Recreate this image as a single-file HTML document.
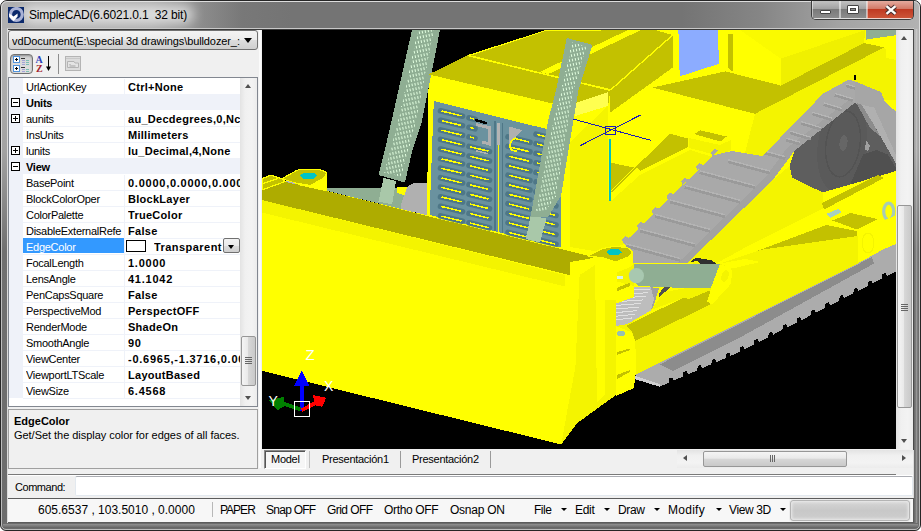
<!DOCTYPE html>
<html><head><meta charset="utf-8">
<style>
html,body{margin:0;padding:0;}
body{width:921px;height:531px;position:relative;overflow:hidden;background:#fff;font-family:"Liberation Sans",sans-serif;font-size:11px;color:#000;}
.a{position:absolute;}
i{position:absolute;display:block;}
#frame{left:0;top:0;width:921px;height:531px;box-sizing:border-box;background:linear-gradient(#b4b4b4 0,#b2b2b2 40px,#a2a2a2 150px,#707070 250px,#6c6c6c 531px);border:1px solid #262626;border-radius:7px 7px 6px 6px;}
#frame2{left:1px;top:1px;width:919px;height:529px;box-sizing:border-box;border:1px solid rgba(255,255,255,.55);border-radius:6px 6px 5px 5px;}
#title{left:2px;top:2px;width:917px;height:26px;background:linear-gradient(90deg,#b0b0b0 0,#a8a8a8 150px,#8c8c8c 200px,#787878 240px,#747474 290px,#747474 680px,#868686 760px,#a4a4a4 840px,#b2b2b2 917px);border-radius:5px 5px 0 0;}
#client{left:8px;top:30px;width:905px;height:492px;background:#f0f0f0;}
#cborder{left:7px;top:28px;width:907px;height:495px;box-sizing:border-box;border:1px solid #dcdcdc;border-top-color:#c8c8c8;}
.t{white-space:nowrap;line-height:16px;}
.b{font-weight:bold;}
#ttext{left:29px;top:7px;letter-spacing:-0.165px;font-size:12px;line-height:16px;white-space:nowrap;color:#000;}
#glow{left:22px;top:5px;width:172px;height:19px;background:rgba(255,255,255,.62);filter:blur(6px);border-radius:10px;}
/* window buttons */
#wb{left:811px;top:1px;width:103px;height:19px;border:1px solid #3c3c3c;border-top:none;box-sizing:border-box;border-radius:0 0 5px 5px;overflow:hidden;background:#888;}
#wb .bt{position:absolute;top:0;height:18px;box-sizing:border-box;border:1px solid rgba(255,255,255,.5);border-top:none;}
.gl{background:linear-gradient(#c2c2c2 0,#a2a2a2 45%,#7a7a7a 50%,#8c8c8c 100%);}
.rd{background:linear-gradient(#e4aa9e 0,#d27a68 45%,#c03a22 50%,#cc5438 100%);}
/* combo */
#combo{left:8px;top:30px;width:250px;height:20px;box-sizing:border-box;border:1px solid #707070;border-radius:3px;background:linear-gradient(#f3f3f3,#ebebeb 50%,#dddddd 50%,#cfcfcf);}
#combo .t{left:3px;top:2px;font-size:11px;letter-spacing:-0.1px;width:232px;overflow:hidden;}
/* toolbar */
#tb1{left:10px;top:54px;width:23px;height:20px;box-sizing:border-box;border:1px solid #727272;border-radius:4px;background:linear-gradient(#cdcdcd,#dadada 40%,#e0e0e0);box-shadow:inset 0 1px 2px rgba(0,0,0,.3);}
/* grid */
#grid{left:8px;top:77px;width:250px;height:330px;box-sizing:border-box;border:1px solid #828790;background:#fff;}
#gin{left:0;top:0;width:231px;height:328px;overflow:hidden;}
#gutter{left:0;top:0;width:14px;height:320px;background:#eff2f9;}
.row{position:absolute;left:0;height:16px;width:231px;}
.cat{background:#eff2f9;}
.nm{top:1px;font-size:11px;letter-spacing:-0.27px;}
.val{top:1px;font-size:11px;letter-spacing:0.28px;}
.vline{left:115px;top:1px;width:1px;height:16px;background:#eff2f9;}
.hline{left:14px;top:16px;width:217px;height:1px;background:#eff2f9;}
.box{position:absolute;left:2px;width:9px;height:9px;box-sizing:border-box;border:1px solid #000;background:#fff;}
.box .h{left:1px;top:3px;width:5px;height:1px;background:#000;}
.box .v{left:3px;top:1px;width:1px;height:5px;background:#000;}
.selbg{left:14px;top:0;width:101px;height:15px;background:#3399ff;}
.swatch{left:117px;top:2px;width:20px;height:12px;box-sizing:border-box;border:1px solid #000;background:#fff;}
.ddbtn{left:214px;top:0;width:17px;height:15px;box-sizing:border-box;border:1px solid #707070;border-radius:2px;background:linear-gradient(#f2f2f2,#ebebeb 50%,#dddddd 50%,#cfcfcf);}
.ddbtn i{left:4px;top:6px;border:3.5px solid transparent;border-top:4px solid #000;border-bottom:none;}
/* scrollbars */
.sbv{background:linear-gradient(90deg,#e3e3e3,#f0f0f0 30%,#f3f3f3 70%,#ececec);}
.sbh{background:linear-gradient(#e3e3e3,#f0f0f0 30%,#f3f3f3 70%,#ececec);}
.thv{box-sizing:border-box;border:1px solid #979797;border-radius:2px;background:linear-gradient(90deg,#f5f5f5,#e9e9e9 45%,#d7d7d7 50%,#c9c9c9);}
.thh{box-sizing:border-box;border:1px solid #979797;border-radius:2px;background:linear-gradient(#f5f5f5,#e9e9e9 45%,#d7d7d7 50%,#c9c9c9);}
.au{border:3.5px solid transparent;border-bottom:4px solid #505050;border-top:none;width:0;height:0;}
.ad{border:3.5px solid transparent;border-top:4px solid #505050;border-bottom:none;width:0;height:0;}
.al{border:3.5px solid transparent;border-right:4px solid #505050;border-left:none;width:0;height:0;}
.ar{border:3.5px solid transparent;border-left:4px solid #505050;border-right:none;width:0;height:0;}
/* desc */
#desc{left:8px;top:409px;width:250px;height:60px;box-sizing:border-box;border:1px solid #a0a0a0;background:#f0f0f0;}
/* viewport */
#vp{left:262px;top:30px;width:634px;height:419px;background:#000;overflow:hidden;}
/* tabs */
.tab{top:451px;height:19px;font-size:11px;letter-spacing:-0.27px;line-height:16px;white-space:nowrap;}
/* status */
#status{left:8px;top:499px;width:905px;height:23px;background:#f7f7f7;}
.st{top:502px;font-size:12px;line-height:16px;white-space:nowrap;}
.dd{border:3px solid transparent;border-top:3.5px solid #000;border-bottom:none;width:0;height:0;top:508px;}
</style></head><body>
<div class="a" id="frame"></div>
<div class="a" id="title"></div>
<div class="a" id="frame2"></div>
<div class="a" id="glow"></div>
<div class="a" id="cborder"></div>
<div class="a" id="client"></div>

<i style="left:8px;top:29px;width:906px;height:1px;background:#3a3a3a"></i><i style="left:913px;top:29px;width:1px;height:421px;background:#4a4a4a"></i><i style="left:259px;top:30px;width:2px;height:438px;background:#fbfbfb"></i>
<!-- title -->
<svg class="a" style="left:8px;top:7px" width="16" height="16" viewBox="0 0 16 16">
<rect width="16" height="16" fill="#0c2a6c"/>
<circle cx="8.4" cy="7.4" r="5.9" fill="none" stroke="#a9b2d6" stroke-width="3.2"/>
<polygon points="1.2,6.6 5.5,9.6 9.6,6.4 9.6,9.6 5.7,13.9 1.2,10" fill="#fff"/>
</svg>
<div class="a" id="ttext">SimpleCAD(6.6021.0.1&nbsp; 32 bit)</div>
<div class="a" id="wb">
 <div class="bt gl" style="left:0;width:28px"></div>
 <div class="bt gl" style="left:28px;width:27px"></div>
 <div class="bt rd" style="left:55px;width:47px"></div>
 <i style="left:8px;top:9px;width:11px;height:4px;box-sizing:border-box;border:1px solid #444;background:#fff;border-radius:1px"></i>
 <i style="left:35px;top:4px;width:12px;height:9px;box-sizing:border-box;border:1px solid #444;background:#fff;border-radius:1px"></i>
 <i style="left:38px;top:7px;width:6px;height:3px;box-sizing:border-box;border:1px solid #444;background:#8f8f8f"></i>
 <svg class="a" style="left:72px;top:3px" width="14" height="12" viewBox="0 0 14 12"><path d="M2.5 2.2 L11.5 9.8 M11.5 2.2 L2.5 9.800" stroke="#4a3030" stroke-width="4.4"/><path d="M2.5 2.2 L11.5 9.8 M11.5 2.2 L2.5 9.800" stroke="#fff" stroke-width="2.4"/></svg>
</div>

<!-- combo -->
<div class="a" id="combo"><span class="a t">vdDocument(E:\special 3d drawings\bulldozer_:</span>
<i style="left:235px;top:7px;border:4px solid transparent;border-top:5px solid #000;border-bottom:none"></i></div>

<!-- toolbar -->
<div class="a" id="tb1"></div>
<svg class="a" style="left:10px;top:54px" width="75" height="20" viewBox="0 0 75 20">
 <g fill="#fff" stroke="#4f93dd" stroke-width="1"><rect x="3.5" y="2.5" width="6" height="6"/><rect x="3.5" y="11.5" width="6" height="6"/></g>
 <g stroke="#000" stroke-width="1"><path d="M5 5.5h3M6.5 4v3M5 14.5h3M6.5 13v3"/><path d="M11 4.5h4M11 13.5h4" stroke="#333"/></g>
 <g stroke-width="1"><path d="M12 6.5h3M12 8.5h3M12 10.5h3M12 15.5h3M12 17.5h3" stroke="#a6a2d8"/><path d="M16 6.5h3M16 8.5h3M16 10.5h3M16 15.5h3M16 17.5h3" stroke="#7cc0b4"/></g>
 <text x="25.5" y="9.3" font-family="Liberation Serif,serif" font-weight="bold" font-size="10" fill="#2b3fb8">A</text>
 <text x="26" y="17.6" font-family="Liberation Serif,serif" font-weight="bold" font-size="10" fill="#a3222f">Z</text>
 <path d="M38.5 2v14" stroke="#000" stroke-width="1"/><path d="M36 12.5h5l-2.5 4.5z" fill="#000"/>
 <path d="M48.5 0v20" stroke="#8e8e8e" stroke-width="1"/>
 <g fill="none" stroke="#b4b4b4"><rect x="55.500" y="2.500" width="15" height="14" fill="#dcdcdc"/><path d="M56 4.500h14" stroke="#c8c8c8"/><path d="M57.500 7.500h6.500l1 1.500h3.500v4.500h-11z" fill="#e4e4e4" stroke="#b4b4b4"/><path d="M59.500 10.500h1M59.500 12h6" stroke="#a4a4a4"/></g>
</svg>

<!-- grid -->
<div class="a" id="grid">
 <div class="a" id="gin"><div class="a" id="gutter"></div>
<div class="row" style="top:0px"><span class="t a nm" style="left:17px;width:97px;overflow:hidden">UrlActionKey</span><span class="a vline"></span><span class="t a val b" style="left:119px;width:112px;overflow:hidden">Ctrl+None</span><span class="a hline"></span></div>
<div class="row cat" style="top:16px"><span class="box" style="top:4px"><i class="h"></i></span><span class="t a nm b" style="left:17px">Units</span></div>
<div class="row" style="top:32px"><span class="box" style="top:4px"><i class="h"></i><i class="v"></i></span><span class="t a nm" style="left:17px;width:97px;overflow:hidden">aunits</span><span class="a vline"></span><span class="t a val b" style="left:119px;width:112px;overflow:hidden">au_Decdegrees,0,Nc</span><span class="a hline"></span></div>
<div class="row" style="top:48px"><span class="t a nm" style="left:17px;width:97px;overflow:hidden">InsUnits</span><span class="a vline"></span><span class="t a val b" style="left:119px;width:112px;overflow:hidden">Millimeters</span><span class="a hline"></span></div>
<div class="row" style="top:64px"><span class="box" style="top:4px"><i class="h"></i><i class="v"></i></span><span class="t a nm" style="left:17px;width:97px;overflow:hidden">lunits</span><span class="a vline"></span><span class="t a val b" style="left:119px;width:112px;overflow:hidden">lu_Decimal,4,None</span><span class="a hline"></span></div>
<div class="row cat" style="top:80px"><span class="box" style="top:4px"><i class="h"></i></span><span class="t a nm b" style="left:17px">View</span></div>
<div class="row" style="top:96px"><span class="t a nm" style="left:17px;width:97px;overflow:hidden">BasePoint</span><span class="a vline"></span><span class="t a val b" style="left:119px;width:112px;overflow:hidden;letter-spacing:0.75px">0.0000,0.0000,0.0000</span><span class="a hline"></span></div>
<div class="row" style="top:112px"><span class="t a nm" style="left:17px;width:97px;overflow:hidden">BlockColorOper</span><span class="a vline"></span><span class="t a val b" style="left:119px;width:112px;overflow:hidden">BlockLayer</span><span class="a hline"></span></div>
<div class="row" style="top:128px"><span class="t a nm" style="left:17px;width:97px;overflow:hidden">ColorPalette</span><span class="a vline"></span><span class="t a val b" style="left:119px;width:112px;overflow:hidden">TrueColor</span><span class="a hline"></span></div>
<div class="row" style="top:144px"><span class="t a nm" style="left:17px;width:97px;overflow:hidden">DisableExternalRefe</span><span class="a vline"></span><span class="t a val b" style="left:119px;width:112px;overflow:hidden">False</span><span class="a hline"></span></div>
<div class="row" style="top:160px"><span class="a selbg"></span><span class="t a nm" style="left:17px;color:#fff">EdgeColor</span><span class="a vline"></span><span class="a swatch"></span><span class="t a val b" style="left:145px;width:69px;overflow:hidden;letter-spacing:0.45px">Transparent</span><span class="a ddbtn"><i></i></span><span class="a hline"></span></div>
<div class="row" style="top:176px"><span class="t a nm" style="left:17px;width:97px;overflow:hidden">FocalLength</span><span class="a vline"></span><span class="t a val b" style="left:119px;width:112px;overflow:hidden;letter-spacing:0.75px">1.0000</span><span class="a hline"></span></div>
<div class="row" style="top:192px"><span class="t a nm" style="left:17px;width:97px;overflow:hidden">LensAngle</span><span class="a vline"></span><span class="t a val b" style="left:119px;width:112px;overflow:hidden;letter-spacing:0.75px">41.1042</span><span class="a hline"></span></div>
<div class="row" style="top:208px"><span class="t a nm" style="left:17px;width:97px;overflow:hidden">PenCapsSquare</span><span class="a vline"></span><span class="t a val b" style="left:119px;width:112px;overflow:hidden">False</span><span class="a hline"></span></div>
<div class="row" style="top:224px"><span class="t a nm" style="left:17px;width:97px;overflow:hidden">PerspectiveMod</span><span class="a vline"></span><span class="t a val b" style="left:119px;width:112px;overflow:hidden">PerspectOFF</span><span class="a hline"></span></div>
<div class="row" style="top:240px"><span class="t a nm" style="left:17px;width:97px;overflow:hidden">RenderMode</span><span class="a vline"></span><span class="t a val b" style="left:119px;width:112px;overflow:hidden">ShadeOn</span><span class="a hline"></span></div>
<div class="row" style="top:256px"><span class="t a nm" style="left:17px;width:97px;overflow:hidden">SmoothAngle</span><span class="a vline"></span><span class="t a val b" style="left:119px;width:112px;overflow:hidden;letter-spacing:0.75px">90</span><span class="a hline"></span></div>
<div class="row" style="top:272px"><span class="t a nm" style="left:17px;width:97px;overflow:hidden">ViewCenter</span><span class="a vline"></span><span class="t a val b" style="left:119px;width:112px;overflow:hidden;letter-spacing:0.75px">-0.6965,-1.3716,0.000</span><span class="a hline"></span></div>
<div class="row" style="top:288px"><span class="t a nm" style="left:17px;width:97px;overflow:hidden">ViewportLTScale</span><span class="a vline"></span><span class="t a val b" style="left:119px;width:112px;overflow:hidden">LayoutBased</span><span class="a hline"></span></div>
<div class="row" style="top:304px"><span class="t a nm" style="left:17px;width:97px;overflow:hidden">ViewSize</span><span class="a vline"></span><span class="t a val b" style="left:119px;width:112px;overflow:hidden;letter-spacing:0.75px">6.4568</span><span class="a hline"></span></div>
 </div>
 <div class="a sbv" style="left:231px;top:0;width:17px;height:328px"></div>
 <i class="au" style="left:236px;top:6px"></i>
 <i class="ad" style="left:236px;top:318px"></i>
 <div class="a thv" style="left:232px;top:258px;width:15px;height:50px"></div>
 <i style="left:236px;top:279px;width:7px;height:1px;background:#666;box-shadow:0 2px 0 #666,0 4px 0 #666,0 6px 0 #666"></i>
</div>

<!-- desc -->
<div class="a" id="desc"><span class="a t b" style="left:5px;top:3px;font-size:11px">EdgeColor</span><span class="a t" style="left:5px;top:17px;font-size:11px;letter-spacing:-0.04px">Get/Set the display color for edges of all faces.</span></div>

<!-- viewport -->
<div class="a" id="vp"><svg width="634" height="419" viewBox="262 30 634 419" shape-rendering="crispEdges" style="position:absolute;left:0;top:0;display:block"><defs><pattern id="dots" width="3" height="4.5" patternUnits="userSpaceOnUse" patternTransform="rotate(-12)"><rect width="3" height="4.5" fill="#8fae93"/><rect x="0.6" y="0.5" width="1.4" height="2.9" fill="#e2ffe0"/></pattern></defs><polygon points="428.7,74.4 467.6,55.1 546.0,30.0 896.0,30.0 896.0,246.0 857.6,263.5 725.5,330.0 636.5,374.2 634.0,375.0 634.0,388.0 617.0,394.0 577.0,423.0 561.3,444.5 262.0,370.8 262.0,187.6 287.0,181.3 427.0,215.3" fill="#ffff00" />
<polygon points="412.0,30.0 440.0,30.0 421.7,122.0 412.4,150.0 405.0,182.5 378.5,175.0 384.8,150.0 391.3,122.0" fill="#8fae93" />
<polygon points="418,30 434,30 415.5,124 401,177 384,172.5 397.5,124" fill="url(#dots)"/>
<polygon points="383.5,178.0 396.0,181.0 392.0,204.0 378.5,201.0" fill="#a9c8a9" />
<polygon points="327.0,187.5 427.0,187.5 427.0,215.3 327.0,190.8" fill="#8fae93" />
<polygon points="383.5,178.0 396.0,181.0 392.0,204.5 378.5,201.5" fill="#a9c8a9" />
<polygon points="397.0,186.5 415.0,186.5 408.0,196.0 397.0,193.0" fill="#ffff00" />
<polygon points="401.4,203.0 407.8,186.0 413.0,183.4 427.0,183.4 427.0,215.3 401.4,209.0" fill="#b0b0b0" />
<polygon points="428.7,74.4 467.6,55.1 610.5,90.2 608.0,106.0 549.0,102.7" fill="#c3c100" />
<polygon points="468.5,56.3 546.0,31.0 655.0,30.0 672.7,35.0 610.5,89.0" fill="#c3c100" />
<polygon points="540.0,71.8 628.0,30.0 641.0,30.0 548.0,74.2" fill="#ffff00" />
<line x1="467.6" y1="55.4" x2="610.5" y2="90.2" stroke="#ffff00" stroke-width="1.6" />
<polygon points="672.7,35.0 672.7,67.6 610.0,112.7 610.0,90.0" fill="#c3c100" />
<line x1="610.5" y1="90.0" x2="672.7" y2="35.0" stroke="#ffff00" stroke-width="1.4" />
<polygon points="575.0,103.0 608.0,92.0 608.0,106.0 575.0,116.0" fill="#ffff50" />
<polygon points="678.4,30.0 717.8,30.0 719.0,63.8 679.7,76.4" fill="#8cacff" />
<polygon points="727.8,33.8 732.8,33.8 732.8,71.5 727.8,68.0" fill="#c3c100" />
<polygon points="740.0,30.0 866.0,30.0 865.0,30.0 780.8,58.7" fill="#fafa00" />
<polygon points="780.8,58.7 865.0,30.0 864.2,43.0 780.8,85.6" fill="#f0f000" />
<polygon points="652.6,87.6 725.3,71.4 780.8,85.6 864.2,43.0 884.2,47.4 755.0,113.8" fill="#c3c100" />
<polygon points="884.2,47.4 886.0,49.0 886.0,58.0 757.0,122.5 755.0,113.8" fill="#f4f400" />
<polygon points="757.0,122.5 886.0,58.0 896.0,60.0 896.0,100.0 842.0,100.0 758.0,152.0" fill="#f4f400" />
<polygon points="866.0,30.0 896.0,30.0 896.0,35.2 866.0,39.6" fill="#8fae93" />
<polygon points="694.0,134.0 700.3,130.3 726.6,136.5 720.3,141.5" fill="#c3c100" />
<polygon points="689.0,138.0 720.0,145.0 731.0,140.0 731.0,150.0 720.0,156.0 689.0,148.0" fill="#f4f400" />
<polygon points="610.2,162.6 634.0,167.6 611.4,190.2" fill="#c3c100" />
<polygon points="671.0,134.0 688.0,138.5 688.0,147.0 640.0,171.0 636.0,167.0" fill="#c3c100" />
<line x1="670.0" y1="134.5" x2="611.5" y2="192.0" stroke="#c3c100" stroke-width="1.5" />
<polygon points="570.0,142.0 608.0,106.0 608.0,200.0 612.0,200.0 640.0,175.0 690.0,150.0 713.0,157.0 624.0,244.0 600.0,252.0 570.0,247.0" fill="#f4f400" />
<polygon points="433.8,101.0 553.0,130.6 561.0,132.6 561.0,247.5 429.6,215.0" fill="#6a929f" />
<line x1="440.5" y1="110.8" x2="462.5" y2="116.2" stroke="#4e7787" stroke-width="5.6" stroke-linecap="round" shape-rendering="auto"/>
<line x1="441.5" y1="111.0" x2="461.5" y2="115.9" stroke="#ffff00" stroke-width="1.5" stroke-linecap="butt"/>
<line x1="469.0" y1="117.8" x2="475.0" y2="119.3" stroke="#4e7787" stroke-width="5.6" stroke-linecap="round" shape-rendering="auto"/>
<line x1="470.0" y1="118.0" x2="474.0" y2="119.0" stroke="#ffff00" stroke-width="1.5" stroke-linecap="butt"/>
<line x1="536.0" y1="134.2" x2="556.0" y2="139.1" stroke="#4e7787" stroke-width="5.6" stroke-linecap="round" shape-rendering="auto"/>
<line x1="537.0" y1="134.4" x2="555.0" y2="138.9" stroke="#ffff00" stroke-width="1.5" stroke-linecap="butt"/>
<line x1="440.5" y1="120.3" x2="462.5" y2="125.7" stroke="#4e7787" stroke-width="5.6" stroke-linecap="round" shape-rendering="auto"/>
<line x1="441.5" y1="120.6" x2="461.5" y2="125.5" stroke="#ffff00" stroke-width="1.5" stroke-linecap="butt"/>
<line x1="469.0" y1="127.3" x2="475.0" y2="128.8" stroke="#4e7787" stroke-width="5.6" stroke-linecap="round" shape-rendering="auto"/>
<line x1="470.0" y1="127.6" x2="474.0" y2="128.6" stroke="#ffff00" stroke-width="1.5" stroke-linecap="butt"/>
<line x1="508.0" y1="136.9" x2="530.0" y2="142.3" stroke="#4e7787" stroke-width="5.6" stroke-linecap="round" shape-rendering="auto"/>
<line x1="509.0" y1="137.1" x2="529.0" y2="142.0" stroke="#ffff00" stroke-width="1.5" stroke-linecap="butt"/>
<line x1="536.0" y1="143.7" x2="556.0" y2="148.6" stroke="#4e7787" stroke-width="5.6" stroke-linecap="round" shape-rendering="auto"/>
<line x1="537.0" y1="144.0" x2="555.0" y2="148.4" stroke="#ffff00" stroke-width="1.5" stroke-linecap="butt"/>
<line x1="440.5" y1="129.9" x2="462.5" y2="135.3" stroke="#4e7787" stroke-width="5.6" stroke-linecap="round" shape-rendering="auto"/>
<line x1="441.5" y1="130.1" x2="461.5" y2="135.0" stroke="#ffff00" stroke-width="1.5" stroke-linecap="butt"/>
<line x1="469.0" y1="136.9" x2="475.0" y2="138.4" stroke="#4e7787" stroke-width="5.6" stroke-linecap="round" shape-rendering="auto"/>
<line x1="470.0" y1="137.1" x2="474.0" y2="138.1" stroke="#ffff00" stroke-width="1.5" stroke-linecap="butt"/>
<line x1="508.0" y1="146.4" x2="530.0" y2="151.8" stroke="#4e7787" stroke-width="5.6" stroke-linecap="round" shape-rendering="auto"/>
<line x1="509.0" y1="146.7" x2="529.0" y2="151.6" stroke="#ffff00" stroke-width="1.5" stroke-linecap="butt"/>
<line x1="536.0" y1="153.3" x2="556.0" y2="158.2" stroke="#4e7787" stroke-width="5.6" stroke-linecap="round" shape-rendering="auto"/>
<line x1="537.0" y1="153.5" x2="555.0" y2="158.0" stroke="#ffff00" stroke-width="1.5" stroke-linecap="butt"/>
<line x1="440.5" y1="139.4" x2="462.5" y2="144.8" stroke="#4e7787" stroke-width="5.6" stroke-linecap="round" shape-rendering="auto"/>
<line x1="441.5" y1="139.7" x2="461.5" y2="144.6" stroke="#ffff00" stroke-width="1.5" stroke-linecap="butt"/>
<line x1="469.0" y1="146.4" x2="489.5" y2="151.5" stroke="#4e7787" stroke-width="5.6" stroke-linecap="round" shape-rendering="auto"/>
<line x1="470.0" y1="146.7" x2="488.5" y2="151.2" stroke="#ffff00" stroke-width="1.5" stroke-linecap="butt"/>
<line x1="508.0" y1="156.0" x2="530.0" y2="161.4" stroke="#4e7787" stroke-width="5.6" stroke-linecap="round" shape-rendering="auto"/>
<line x1="509.0" y1="156.2" x2="529.0" y2="161.1" stroke="#ffff00" stroke-width="1.5" stroke-linecap="butt"/>
<line x1="536.0" y1="162.8" x2="556.0" y2="167.7" stroke="#4e7787" stroke-width="5.6" stroke-linecap="round" shape-rendering="auto"/>
<line x1="537.0" y1="163.1" x2="555.0" y2="167.5" stroke="#ffff00" stroke-width="1.5" stroke-linecap="butt"/>
<line x1="440.5" y1="149.0" x2="462.5" y2="154.4" stroke="#4e7787" stroke-width="5.6" stroke-linecap="round" shape-rendering="auto"/>
<line x1="441.5" y1="149.2" x2="461.5" y2="154.1" stroke="#ffff00" stroke-width="1.5" stroke-linecap="butt"/>
<line x1="469.0" y1="156.0" x2="489.5" y2="161.0" stroke="#4e7787" stroke-width="5.6" stroke-linecap="round" shape-rendering="auto"/>
<line x1="470.0" y1="156.2" x2="488.5" y2="160.8" stroke="#ffff00" stroke-width="1.5" stroke-linecap="butt"/>
<line x1="508.0" y1="165.5" x2="530.0" y2="170.9" stroke="#4e7787" stroke-width="5.6" stroke-linecap="round" shape-rendering="auto"/>
<line x1="509.0" y1="165.8" x2="529.0" y2="170.7" stroke="#ffff00" stroke-width="1.5" stroke-linecap="butt"/>
<line x1="536.0" y1="172.4" x2="556.0" y2="177.3" stroke="#4e7787" stroke-width="5.6" stroke-linecap="round" shape-rendering="auto"/>
<line x1="537.0" y1="172.6" x2="555.0" y2="177.1" stroke="#ffff00" stroke-width="1.5" stroke-linecap="butt"/>
<line x1="440.5" y1="158.6" x2="462.5" y2="163.9" stroke="#4e7787" stroke-width="5.6" stroke-linecap="round" shape-rendering="auto"/>
<line x1="441.5" y1="158.8" x2="461.5" y2="163.7" stroke="#ffff00" stroke-width="1.5" stroke-linecap="butt"/>
<line x1="469.0" y1="165.5" x2="489.5" y2="170.6" stroke="#4e7787" stroke-width="5.6" stroke-linecap="round" shape-rendering="auto"/>
<line x1="470.0" y1="165.8" x2="488.5" y2="170.3" stroke="#ffff00" stroke-width="1.5" stroke-linecap="butt"/>
<line x1="508.0" y1="175.1" x2="530.0" y2="180.5" stroke="#4e7787" stroke-width="5.6" stroke-linecap="round" shape-rendering="auto"/>
<line x1="509.0" y1="175.3" x2="529.0" y2="180.2" stroke="#ffff00" stroke-width="1.5" stroke-linecap="butt"/>
<line x1="536.0" y1="181.9" x2="556.0" y2="186.8" stroke="#4e7787" stroke-width="5.6" stroke-linecap="round" shape-rendering="auto"/>
<line x1="537.0" y1="182.2" x2="555.0" y2="186.6" stroke="#ffff00" stroke-width="1.5" stroke-linecap="butt"/>
<line x1="440.5" y1="168.1" x2="462.5" y2="173.5" stroke="#4e7787" stroke-width="5.6" stroke-linecap="round" shape-rendering="auto"/>
<line x1="441.5" y1="168.3" x2="461.5" y2="173.2" stroke="#ffff00" stroke-width="1.5" stroke-linecap="butt"/>
<line x1="469.0" y1="175.1" x2="489.5" y2="180.1" stroke="#4e7787" stroke-width="5.6" stroke-linecap="round" shape-rendering="auto"/>
<line x1="470.0" y1="175.3" x2="488.5" y2="179.9" stroke="#ffff00" stroke-width="1.5" stroke-linecap="butt"/>
<line x1="508.0" y1="184.6" x2="530.0" y2="190.0" stroke="#4e7787" stroke-width="5.6" stroke-linecap="round" shape-rendering="auto"/>
<line x1="509.0" y1="184.9" x2="529.0" y2="189.8" stroke="#ffff00" stroke-width="1.5" stroke-linecap="butt"/>
<line x1="536.0" y1="191.5" x2="556.0" y2="196.4" stroke="#4e7787" stroke-width="5.6" stroke-linecap="round" shape-rendering="auto"/>
<line x1="537.0" y1="191.7" x2="555.0" y2="196.2" stroke="#ffff00" stroke-width="1.5" stroke-linecap="butt"/>
<line x1="440.5" y1="177.7" x2="462.5" y2="183.0" stroke="#4e7787" stroke-width="5.6" stroke-linecap="round" shape-rendering="auto"/>
<line x1="441.5" y1="177.9" x2="461.5" y2="182.8" stroke="#ffff00" stroke-width="1.5" stroke-linecap="butt"/>
<line x1="469.0" y1="184.6" x2="489.5" y2="189.7" stroke="#4e7787" stroke-width="5.6" stroke-linecap="round" shape-rendering="auto"/>
<line x1="470.0" y1="184.9" x2="488.5" y2="189.4" stroke="#ffff00" stroke-width="1.5" stroke-linecap="butt"/>
<line x1="508.0" y1="194.2" x2="530.0" y2="199.6" stroke="#4e7787" stroke-width="5.6" stroke-linecap="round" shape-rendering="auto"/>
<line x1="509.0" y1="194.4" x2="529.0" y2="199.3" stroke="#ffff00" stroke-width="1.5" stroke-linecap="butt"/>
<line x1="536.0" y1="201.0" x2="556.0" y2="205.9" stroke="#4e7787" stroke-width="5.6" stroke-linecap="round" shape-rendering="auto"/>
<line x1="537.0" y1="201.3" x2="555.0" y2="205.7" stroke="#ffff00" stroke-width="1.5" stroke-linecap="butt"/>
<line x1="440.5" y1="187.2" x2="462.5" y2="192.6" stroke="#4e7787" stroke-width="5.6" stroke-linecap="round" shape-rendering="auto"/>
<line x1="441.5" y1="187.4" x2="461.5" y2="192.3" stroke="#ffff00" stroke-width="1.5" stroke-linecap="butt"/>
<line x1="469.0" y1="194.2" x2="489.5" y2="199.2" stroke="#4e7787" stroke-width="5.6" stroke-linecap="round" shape-rendering="auto"/>
<line x1="470.0" y1="194.4" x2="488.5" y2="199.0" stroke="#ffff00" stroke-width="1.5" stroke-linecap="butt"/>
<line x1="508.0" y1="203.7" x2="530.0" y2="209.1" stroke="#4e7787" stroke-width="5.6" stroke-linecap="round" shape-rendering="auto"/>
<line x1="509.0" y1="204.0" x2="529.0" y2="208.9" stroke="#ffff00" stroke-width="1.5" stroke-linecap="butt"/>
<line x1="536.0" y1="210.6" x2="556.0" y2="215.5" stroke="#4e7787" stroke-width="5.6" stroke-linecap="round" shape-rendering="auto"/>
<line x1="537.0" y1="210.8" x2="555.0" y2="215.3" stroke="#ffff00" stroke-width="1.5" stroke-linecap="butt"/>
<line x1="440.5" y1="196.8" x2="462.5" y2="202.1" stroke="#4e7787" stroke-width="5.6" stroke-linecap="round" shape-rendering="auto"/>
<line x1="441.5" y1="197.0" x2="461.5" y2="201.9" stroke="#ffff00" stroke-width="1.5" stroke-linecap="butt"/>
<line x1="469.0" y1="203.7" x2="489.5" y2="208.8" stroke="#4e7787" stroke-width="5.6" stroke-linecap="round" shape-rendering="auto"/>
<line x1="470.0" y1="204.0" x2="488.5" y2="208.5" stroke="#ffff00" stroke-width="1.5" stroke-linecap="butt"/>
<line x1="508.0" y1="213.3" x2="530.0" y2="218.7" stroke="#4e7787" stroke-width="5.6" stroke-linecap="round" shape-rendering="auto"/>
<line x1="509.0" y1="213.5" x2="529.0" y2="218.4" stroke="#ffff00" stroke-width="1.5" stroke-linecap="butt"/>
<line x1="536.0" y1="220.1" x2="556.0" y2="225.0" stroke="#4e7787" stroke-width="5.6" stroke-linecap="round" shape-rendering="auto"/>
<line x1="537.0" y1="220.4" x2="555.0" y2="224.8" stroke="#ffff00" stroke-width="1.5" stroke-linecap="butt"/>
<line x1="440.5" y1="206.3" x2="462.5" y2="211.7" stroke="#4e7787" stroke-width="5.6" stroke-linecap="round" shape-rendering="auto"/>
<line x1="441.5" y1="206.5" x2="461.5" y2="211.4" stroke="#ffff00" stroke-width="1.5" stroke-linecap="butt"/>
<line x1="469.0" y1="213.3" x2="489.5" y2="218.3" stroke="#4e7787" stroke-width="5.6" stroke-linecap="round" shape-rendering="auto"/>
<line x1="470.0" y1="213.5" x2="488.5" y2="218.1" stroke="#ffff00" stroke-width="1.5" stroke-linecap="butt"/>
<line x1="508.0" y1="222.8" x2="530.0" y2="228.2" stroke="#4e7787" stroke-width="5.6" stroke-linecap="round" shape-rendering="auto"/>
<line x1="509.0" y1="223.1" x2="529.0" y2="228.0" stroke="#ffff00" stroke-width="1.5" stroke-linecap="butt"/>
<line x1="536.0" y1="229.7" x2="556.0" y2="234.6" stroke="#4e7787" stroke-width="5.6" stroke-linecap="round" shape-rendering="auto"/>
<line x1="537.0" y1="229.9" x2="555.0" y2="234.4" stroke="#ffff00" stroke-width="1.5" stroke-linecap="butt"/>
<line x1="440.5" y1="215.9" x2="462.5" y2="221.2" stroke="#4e7787" stroke-width="5.6" stroke-linecap="round" shape-rendering="auto"/>
<line x1="441.5" y1="216.1" x2="461.5" y2="221.0" stroke="#ffff00" stroke-width="1.5" stroke-linecap="butt"/>
<line x1="469.0" y1="222.8" x2="489.5" y2="227.9" stroke="#4e7787" stroke-width="5.6" stroke-linecap="round" shape-rendering="auto"/>
<line x1="470.0" y1="223.1" x2="488.5" y2="227.6" stroke="#ffff00" stroke-width="1.5" stroke-linecap="butt"/>
<line x1="508.0" y1="232.4" x2="530.0" y2="237.8" stroke="#4e7787" stroke-width="5.6" stroke-linecap="round" shape-rendering="auto"/>
<line x1="509.0" y1="232.6" x2="529.0" y2="237.5" stroke="#ffff00" stroke-width="1.5" stroke-linecap="butt"/>
<line x1="536.0" y1="239.2" x2="556.0" y2="244.1" stroke="#4e7787" stroke-width="5.6" stroke-linecap="round" shape-rendering="auto"/>
<line x1="537.0" y1="239.5" x2="555.0" y2="243.9" stroke="#ffff00" stroke-width="1.5" stroke-linecap="butt"/>
<polygon points="493.5,119.5 503.5,122.0 503.5,233.3 493.5,230.8" fill="#6a929f" />
<line x1="494.8" y1="121.0" x2="494.8" y2="231.0" stroke="#4e7787" stroke-width="1.6" />
<line x1="502.3" y1="123.0" x2="502.3" y2="233.0" stroke="#4e7787" stroke-width="1.6" />
<line x1="498.6" y1="123.0" x2="498.6" y2="144.7" stroke="#b4b4b4" stroke-width="3" />
<line x1="498.6" y1="144.7" x2="498.6" y2="232.0" stroke="#ffff00" stroke-width="1.6" />
<polygon points="476.0,123.0 491.0,126.5 491.0,146.0 482.0,143.5 482.0,140.5 487.5,142.0 487.5,129.0 476.0,126.0" fill="#b0b0b0" />
<polygon points="474.5,118.5 487.0,122.0 487.0,124.5 474.5,121.0" fill="#000" />
<polygon points="476.0,150.0 488.0,153.0 488.0,154.5 476.0,151.5" fill="#b0b0b0" />
<polygon points="509.0,126.5 522.0,130.0 515.0,137.0 509.0,147.0" fill="#b0b0b0" />
<path d="M516 138 q-6 2 -6 8 q0 5 7 5" fill="none" stroke="#ffff00" stroke-width="1.6"/>
<polygon points="566.8,38.0 592.5,44.8 578.5,90.0 561.0,195.7 548.0,217.0 530.5,216.5 547.8,122.0 556.0,90.0" fill="#8fae93" />
<polygon points="572,42 587,46 573,92 556,196 545,212 536,211 553,122 561,92" fill="url(#dots)"/>
<polygon points="530.5,216.5 546.5,218.0 540.0,242.5 525.7,239.0" fill="#a9c8a9" />
<polygon points="262.0,187.6 287.0,181.3 595.4,257.6 570.3,262.0 570.3,275.2 262.0,200.1" fill="#aeac00" />
<polygon points="262.0,200.1 565.3,275.2 565.3,286.5 262.0,212.6" fill="#f4f400" />
<polygon points="295.0,183.0 310.7,185.6 324.6,177.4 326.7,173.5 327.2,191.5 300.0,185.5" fill="#ffff00" />
<polygon points="282.0,178.7 296.8,170.4 301.0,169.1 317.6,169.1 324.6,171.3 326.7,173.5 324.6,177.4 310.7,185.6 295.0,183.0" fill="#c3c100" stroke="#ffff00" stroke-width="1.2"/>
<polygon points="300.3,175.6 303.5,172.6 313.5,172.6 317.0,175.6 313.5,178.8 303.5,178.8" fill="#00c4c4" />
<polygon points="262.0,178.7 270.7,175.2 282.0,178.7 285.5,181.3 262.0,190.0" fill="#c3c100" stroke="#ffff00" stroke-width="1.2"/>
<line x1="262.0" y1="184.0" x2="278.0" y2="178.5" stroke="#ffff00" stroke-width="1.2" />
<line x1="286.0" y1="181.3" x2="295.0" y2="183.5" stroke="#b0b0c0" stroke-width="1.2" />
<polygon points="579.6,275.0 600.0,262.0 634.0,262.0 634.0,375.0 617.4,394.0 576.8,423.4 561.3,444.5 567.0,412.2 575.4,367.3" fill="#f4f400" />
<polygon points="595.0,262.0 605.0,262.0 605.0,395.0 597.0,402.0" fill="#ffff00" />
<line x1="616.0" y1="262.0" x2="616.0" y2="390.0" stroke="#ffff00" stroke-width="1" />
<polygon points="794.5,150.8 854.5,103.0 861.8,104.9 874.2,125.2 896.0,163.6 896.0,179.4 876.5,176.0 849.4,186.2 831.2,200.5 822.6,192.4 792.0,177.7 789.6,165.5" fill="#5e5e5e" />
<ellipse cx="842.2" cy="146" rx="24.5" ry="47" fill="#5a5a5a" transform="rotate(8 842.2 146)"/>
<ellipse cx="843" cy="144" rx="17" ry="33" fill="none" stroke="#535353" stroke-width="1.5" transform="rotate(8 843 144)"/>
<ellipse cx="843.5" cy="143" rx="4" ry="8" fill="#666" transform="rotate(8 843 143)"/>
<polygon points="863.0,154.6 876.5,150.0 887.8,154.6 896.0,168.0 896.0,179.4 876.5,176.0 849.4,186.2" fill="#505050" />
<polygon points="866.0,140.0 870.0,146.0 868.0,151.0 865.0,150.0" fill="#a0a0a0" />
<polygon points="623.5,243.4 713.2,155.4 731.9,151.0 762.4,156.1 823.4,93.4 848.3,79.8 854.5,81.0 854.5,103.0 794.5,150.8 772.9,180.0 686.9,263.4 632.7,263.4 632.7,252.0" fill="#a9a9a9" />
<polygon points="854.5,103.0 794.5,150.8 772.9,180.0 686.9,263.4 677.5,263.4 765.0,178.0 787.0,148.0 850.8,98.5" fill="#a2a2a2" />
<polygon points="623.5,243.4 622.0,239.9 625.5,236.4 629.5,237.9" fill="#a9a9a9" />
<polygon points="638.3,228.8 636.8,225.3 640.3,221.8 644.3,223.3" fill="#a9a9a9" />
<polygon points="653.1,214.2 651.6,210.7 655.1,207.2 659.1,208.7" fill="#a9a9a9" />
<polygon points="667.9,199.6 666.4,196.1 669.9,192.6 673.9,194.1" fill="#a9a9a9" />
<polygon points="682.7,185.0 681.2,181.5 684.7,178.0 688.7,179.5" fill="#a9a9a9" />
<polygon points="697.5,170.4 696.0,166.9 699.5,163.4 703.5,164.9" fill="#a9a9a9" />
<polygon points="712.3,155.8 710.8,152.3 714.3,148.8 718.3,150.3" fill="#a9a9a9" />
<line x1="625.5" y1="243.7" x2="680.2" y2="258.5" stroke="#b4b4b4" stroke-width="1.4" />
<line x1="625.5" y1="245.8" x2="680.2" y2="260.6" stroke="#9a9a9a" stroke-width="2.6" />
<line x1="640.3" y1="229.1" x2="695.2" y2="243.9" stroke="#b4b4b4" stroke-width="1.4" />
<line x1="640.3" y1="231.2" x2="695.2" y2="246.0" stroke="#9a9a9a" stroke-width="2.6" />
<line x1="655.1" y1="214.5" x2="710.2" y2="229.4" stroke="#b4b4b4" stroke-width="1.4" />
<line x1="655.1" y1="216.6" x2="710.2" y2="231.5" stroke="#9a9a9a" stroke-width="2.6" />
<line x1="669.9" y1="199.9" x2="725.2" y2="214.8" stroke="#b4b4b4" stroke-width="1.4" />
<line x1="669.9" y1="202.0" x2="725.2" y2="216.9" stroke="#9a9a9a" stroke-width="2.6" />
<line x1="684.7" y1="185.3" x2="740.2" y2="200.3" stroke="#b4b4b4" stroke-width="1.4" />
<line x1="684.7" y1="187.4" x2="740.2" y2="202.4" stroke="#9a9a9a" stroke-width="2.6" />
<line x1="699.5" y1="170.7" x2="755.2" y2="185.7" stroke="#b4b4b4" stroke-width="1.4" />
<line x1="699.5" y1="172.8" x2="755.2" y2="187.8" stroke="#9a9a9a" stroke-width="2.6" />
<line x1="728.3" y1="159.9" x2="770.2" y2="171.2" stroke="#b4b4b4" stroke-width="1.4" />
<line x1="728.3" y1="162.0" x2="770.2" y2="173.3" stroke="#9a9a9a" stroke-width="2.6" />
<line x1="757.1" y1="149.1" x2="785.2" y2="156.6" stroke="#b4b4b4" stroke-width="1.4" />
<line x1="757.1" y1="151.2" x2="785.2" y2="158.7" stroke="#9a9a9a" stroke-width="2.6" />
<line x1="785.9" y1="138.2" x2="800.2" y2="142.1" stroke="#b4b4b4" stroke-width="1.4" />
<line x1="785.9" y1="140.3" x2="800.2" y2="144.2" stroke="#9a9a9a" stroke-width="2.6" />
<line x1="790.0" y1="131.0" x2="811.0" y2="137.3" stroke="#b6b6b6" stroke-width="1.2" />
<line x1="790.0" y1="133.0" x2="811.0" y2="139.3" stroke="#989898" stroke-width="2.4" />
<line x1="801.2" y1="121.6" x2="821.4" y2="127.7" stroke="#b6b6b6" stroke-width="1.2" />
<line x1="801.2" y1="123.6" x2="821.4" y2="129.7" stroke="#989898" stroke-width="2.4" />
<line x1="812.4" y1="112.2" x2="831.8" y2="118.0" stroke="#b6b6b6" stroke-width="1.2" />
<line x1="812.4" y1="114.2" x2="831.8" y2="120.0" stroke="#989898" stroke-width="2.4" />
<line x1="823.6" y1="102.8" x2="842.2" y2="108.4" stroke="#b6b6b6" stroke-width="1.2" />
<line x1="823.6" y1="104.8" x2="842.2" y2="110.4" stroke="#989898" stroke-width="2.4" />
<line x1="834.8" y1="93.4" x2="852.6" y2="98.7" stroke="#b6b6b6" stroke-width="1.2" />
<line x1="834.8" y1="95.4" x2="852.6" y2="100.7" stroke="#989898" stroke-width="2.4" />
<line x1="846.0" y1="84.0" x2="863.0" y2="89.1" stroke="#b6b6b6" stroke-width="1.2" />
<line x1="846.0" y1="86.0" x2="863.0" y2="91.1" stroke="#989898" stroke-width="2.4" />
<polygon points="688.0,263.4 694.0,257.0 708.0,259.0 700.4,260.6 695.5,260.0 692.0,263.4" fill="#404040" />
<polygon points="848.3,79.8 854.0,81.0 881.0,92.0 885.0,102.0 896.0,111.6 896.0,163.6 874.2,125.2 861.8,104.9 854.5,103.0 854.5,81.0" fill="#a6a6a6" />
<polygon points="861.8,104.9 874.2,107.5 896.0,155.0 896.0,163.6 874.2,125.2" fill="#b0b0b0" />
<polygon points="856.2,102.6 861.8,104.9 874.2,125.2 880.0,136.0 870.0,128.0" fill="#8c8c8c" />
<line x1="854.8" y1="75.0" x2="855.3" y2="80.5" stroke="#000" stroke-width="1.5" />
<polygon points="755.0,113.8 757.0,122.5 830.0,86.0 823.4,93.4 762.4,156.1 745.0,153.0" fill="#f4f400" />
<polygon points="822.6,192.4 872.8,178.0 896.0,171.0 896.0,246.0 857.6,263.5 725.5,330.0 690.0,300.0 715.0,264.0 772.9,180.0 789.6,165.5 792.0,177.7" fill="#ffff00" />
<polygon points="686.9,263.4 772.9,180.0 789.6,166.0 792.0,178.0 822.6,192.4 824.0,208.0 748.0,246.0 715.4,263.9" fill="#f4f400" />
<polygon points="822.0,203.0 878.0,175.0 884.0,178.0 824.0,209.5" fill="#c3c100" />
<polygon points="832.5,220.5 850.6,213.0 877.7,219.0 856.6,229.5" fill="#c3c100" />
<polygon points="733.0,260.0 826.5,225.0 856.6,231.0 856.6,236.0 775.5,272.2 747.0,265.3" fill="#c3c100" />
<circle cx="873" cy="237" r="12" fill="#ffff00"/>
<circle cx="873" cy="237" r="8" fill="none" stroke="#f4f400" stroke-width="1"/>
<ellipse cx="888.7" cy="211.5" rx="5" ry="8.3" fill="none" stroke="#a8ccb4" stroke-width="3.2" shape-rendering="auto"/>
<polygon points="826.0,214.0 838.0,209.0 842.0,212.0 830.0,218.0" fill="#a8d0c0" />
<polygon points="884.0,224.0 896.0,219.0 896.0,244.0 884.0,248.5" fill="#4a4a4a" />
<polygon points="616.0,287.0 650.7,287.0 654.0,298.8 650.7,310.7 627.0,324.2 616.0,326.0" fill="#bdbdbd" />
<line x1="616.0" y1="291.0" x2="650.0" y2="289.1" stroke="#e0e0e0" stroke-width="1" />
<line x1="616.0" y1="294.6" x2="647.8" y2="292.7" stroke="#e0e0e0" stroke-width="1" />
<line x1="616.0" y1="298.2" x2="645.6" y2="296.3" stroke="#e0e0e0" stroke-width="1" />
<line x1="616.0" y1="301.8" x2="643.4" y2="299.9" stroke="#e0e0e0" stroke-width="1" />
<line x1="616.0" y1="305.4" x2="641.2" y2="303.5" stroke="#e0e0e0" stroke-width="1" />
<line x1="616.0" y1="309.0" x2="639.0" y2="307.1" stroke="#e0e0e0" stroke-width="1" />
<line x1="616.0" y1="312.6" x2="636.8" y2="310.7" stroke="#e0e0e0" stroke-width="1" />
<line x1="616.0" y1="316.2" x2="634.6" y2="314.3" stroke="#e0e0e0" stroke-width="1" />
<line x1="616.0" y1="319.8" x2="632.4" y2="317.9" stroke="#e0e0e0" stroke-width="1" />
<polygon points="650.7,287.0 659.0,288.5 652.5,309.0 650.7,310.7 654.0,298.8" fill="#a0a0a0" />
<polygon points="659.0,294.0 664.0,287.0 671.0,287.0 659.0,297.0" fill="#505050" />
<polygon points="633.6,263.6 720.0,263.6 710.4,289.2 638.4,286.0 633.6,281.0" fill="#8fae93" />
<circle cx="636.4" cy="275.7" r="7.6" fill="#a8c8b0" shape-rendering="auto"/>
<polygon points="690.0,262.0 696.0,257.5 712.0,260.5 716.0,263.6 700.0,263.6 697.0,261.0" fill="#303030" />
<polygon points="590.4,253.9 605.4,247.6 625.5,246.4 633.0,252.6 633.0,265.2 628.0,268.0 616.0,272.7 616.0,300.0 595.0,300.0 595.0,260.0" fill="#ffff00" />
<polygon points="587.8,255.9 602.5,248.6 613.8,246.3 627.4,247.4 632.5,252.0 628.5,257.0 615.0,262.1 604.8,258.2" fill="#c3c100" stroke="#ffff00" stroke-width="1.2"/>
<polygon points="606.2,252.2 609.8,249.4 618.4,249.4 622.0,252.2 618.4,255.2 609.8,255.2" fill="#00c4c4" />
<polygon points="616.6,284.2 621.7,284.2 621.7,287.0 616.6,287.0" fill="#00c4c4" />
<polygon points="616.6,275.5 623.0,275.5 623.0,279.0 616.6,279.0" fill="#d8f0e0" />
<polygon points="616.0,281.2 633.6,286.0 633.6,297.2 616.0,303.6" fill="#ffff00" />
<polygon points="616.6,288.0 630.2,282.5 630.2,285.9 616.6,291.5" fill="#c3c100" />
<polygon points="626.1,325.9 682.9,298.0 689.7,298.8 710.0,290.3 711.7,303.9 635.4,341.2 632.0,331.0" fill="#c3c100" />
<polygon points="747.6,264.7 814.3,230.0 853.0,230.0 853.0,233.4 774.7,271.5" fill="#c3c100" />
<polygon points="635.2,341.0 711.7,303.9 720.0,263.6 760.0,250.0 857.6,236.0 857.6,263.5 636.5,374.2" fill="#f4f400" />
<polygon points="651.0,310.0 664.0,292.0 690.0,287.5 712.0,287.6 710.0,290.3 689.7,298.8 682.9,298.0" fill="#f4f400" />
<polygon points="719.7,264.7 729.0,266.4 732.4,270.7 730.7,284.2 712.0,304.6 707.0,301.2 712.0,287.6" fill="#ffff00" />
<ellipse cx="725" cy="276" rx="3.5" ry="6" fill="#f4f400" transform="rotate(20 725 276)"/>
<polygon points="720.0,263.6 745.0,259.0 760.0,262.0 732.8,268.4" fill="#ffff00" />
<polygon points="616.0,326.0 632.0,332.4 635.2,342.0 635.2,375.0 634.0,388.0 616.0,396.0" fill="#ffff00" />
<ellipse cx="621" cy="333.5" rx="4" ry="2.5" fill="#98c0b0"/>
<polygon points="617.0,352.0 630.0,348.5 630.0,350.0 617.0,355.0" fill="#c3c100" />
<polygon points="617.0,375.0 630.0,370.0 630.0,372.0 617.0,379.0" fill="#c3c100" />
<polygon points="636.5,374.2 725.5,330.0 857.6,263.5 884.0,249.0 896.0,244.0 896.0,271.4 896.0,271.4 886.8,276.1 885.3,272.9 882.3,274.5 881.8,278.7 872.6,283.5 871.1,280.2 868.1,281.8 867.6,286.0 858.4,290.8 856.9,287.6 853.9,289.1 853.4,293.4 844.2,298.1 842.7,294.9 839.7,296.4 839.2,300.7 830.0,305.4 828.5,302.2 825.5,303.7 825.0,308.0 815.8,312.7 814.3,309.5 811.3,311.1 810.8,315.3 801.6,320.1 800.1,316.8 797.1,318.4 796.6,322.6 787.4,327.4 785.9,324.1 782.9,325.7 782.4,329.9 773.2,334.7 771.7,331.5 768.7,333.0 768.2,337.3 759.0,342.0 757.5,338.8 754.5,340.3 754.0,344.6 744.8,349.3 743.3,346.1 740.3,347.6 739.8,351.9 730.6,355.9 729.1,352.5 726.1,353.8 725.6,358.1 716.4,362.0 714.9,358.7 711.9,360.0 711.4,364.2 702.2,368.2 700.7,364.9 697.7,366.2 697.2,370.4 688.0,374.4 686.5,371.0 683.5,372.3 683.0,376.5 673.8,380.5 672.3,377.2 669.3,378.5 668.8,382.7 659.6,386.7 634.5,379.0" fill="#acacac" />
<polygon points="659.6,364.5 726.8,330.5 857.6,264.5 872.0,257.0 874.0,263.5 740.0,337.5 675.4,370.0 672.7,371.0" fill="#8c8c8c" />
<polygon points="634.5,375.5 659.6,384.0 659.6,386.7 634.5,379.0" fill="#d0d0d0" />
<polygon points="859.0,232.0 896.0,215.0 896.0,244.0 884.0,249.0 859.0,261.5" fill="#ffff00" />
<ellipse cx="868" cy="243" rx="6" ry="10" fill="none" stroke="#f4f400" stroke-width="1"/>
<line x1="573.0" y1="119.0" x2="651.5" y2="140.5" stroke="#1c1cb4" stroke-width="1" />
<line x1="580.5" y1="145.5" x2="640.5" y2="115.0" stroke="#1c1cb4" stroke-width="1" />
<rect x="605.500" y="126.500" width="10" height="8" fill="none" stroke="#1c1cb4" stroke-width="1"/>
<line x1="609.5" y1="138.5" x2="609.5" y2="200.5" stroke="#00c0c0" stroke-width="2" />
<polygon points="299.8,386.0 303.8,386.0 303.8,411.0 299.8,411.0" fill="#0000ff" />
<polygon points="294.1,385.6 309.2,385.6 301.7,370.8" fill="#0000ff" />
<polygon points="301.0,408.5 314.0,401.5 315.5,405.0 302.5,412.0" fill="#ff0000" />
<polygon points="313.3,395.2 326.3,397.8 322.0,406.8 314.0,405.0" fill="#ff0000" />
<polygon points="283.0,401.5 301.0,407.5 300.0,411.0 282.5,405.5" fill="#008000" />
<polygon points="269.0,400.4 283.7,396.9 283.7,406.4 277.6,410.2" fill="#008000" />
<rect x="294.500" y="401.500" width="15" height="15" fill="none" stroke="#fff" stroke-width="1"/>
<text x="305.5" y="360" font-family="Liberation Sans,sans-serif" font-size="15" fill="#fff" >Z</text>
<text x="324" y="390.500" font-family="Liberation Sans,sans-serif" font-size="14" fill="#fff">X</text>
<text x="268.5" y="406" font-family="Liberation Sans,sans-serif" font-size="14" fill="#fff">Y</text></svg></div>
<div class="a sbv" style="left:896px;top:30px;width:17px;height:419px"></div>
<i class="au" style="left:901px;top:36px"></i>
<i class="ad" style="left:901px;top:439px"></i>
<div class="a thv" style="left:897px;top:205px;width:15px;height:203px"></div>
<i style="left:901px;top:304px;width:7px;height:1px;background:#666;box-shadow:0 2px 0 #666,0 4px 0 #666,0 6px 0 #666"></i>

<!-- tabs -->
<div class="a" style="left:264px;top:450px;width:42px;height:19px;box-sizing:border-box;border:1px solid #8a8a8a;border-right-color:#fff;border-bottom-color:#fff;background:#f6f6f6;box-shadow:inset 1px 1px 0 #555"></div>
<div class="a tab" style="left:271px">Model</div>
<div class="a tab" style="left:322px">Presentación1</div>
<div class="a tab" style="left:412px">Presentación2</div>
<i style="left:309px;top:451px;width:1px;height:17px;background:#c0c0c0"></i><i style="left:400px;top:451px;width:1px;height:17px;background:#9a9a9a"></i>
<i style="left:490px;top:451px;width:1px;height:17px;background:#9a9a9a"></i>
<div class="a sbh" style="left:677px;top:450px;width:236px;height:18px"></div>
<i class="al" style="left:683px;top:455px"></i>
<i class="ar" style="left:902px;top:455px"></i>
<div class="a thh" style="left:703px;top:451px;width:144px;height:16px"></div>
<i style="left:770px;top:455px;width:1px;height:7px;background:#666;box-shadow:2px 0 0 #666,4px 0 0 #666"></i>

<!-- command -->
<i style="left:8px;top:474px;width:888px;height:1px;background:#7a7a7a"></i>
<i style="left:8px;top:475px;width:905px;height:1px;background:#fff"></i>
<div class="a t" style="left:15px;top:479px;font-size:11px;letter-spacing:-0.45px">Command:</div>
<div class="a" style="left:75px;top:476px;width:838px;height:20px;box-sizing:border-box;border:1px solid #e3e9ef;border-top-color:#abadb3;border-radius:2px;background:#fff"></div>

<!-- status -->
<i style="left:8px;top:498px;width:906px;height:1px;background:#5c5c5c"></i><i style="left:913px;top:498px;width:1px;height:25px;background:#5c5c5c"></i><i style="left:8px;top:522px;width:906px;height:1px;background:#5c5c5c"></i><i style="left:915px;top:29px;width:3px;height:494px;background:linear-gradient(90deg,rgba(255,255,255,0),rgba(255,255,255,.28),rgba(255,255,255,0))"></i><i style="left:3px;top:524px;width:915px;height:4px;background:linear-gradient(rgba(255,255,255,.25),rgba(255,255,255,.1),rgba(0,0,0,.1))"></i>
<div class="a" id="status" style="top:499px;height:23px"></div>
<div class="a st" style="left:38px">605.6537 , 103.5010 , 0.0000</div>
<i style="left:212px;top:502px;width:1px;height:15px;background:#b8b8b8"></i>
<div class="a st" style="left:220px;letter-spacing:-1px">PAPER</div>
<div class="a st" style="left:266px;letter-spacing:-0.74px">Snap OFF</div>
<div class="a st" style="left:327px;letter-spacing:-0.57px">Grid OFF</div>
<div class="a st" style="left:384px;letter-spacing:-0.34px">Ortho OFF</div>
<div class="a st" style="left:450px;letter-spacing:-0.25px">Osnap ON</div>
<div class="a st" style="left:534px;letter-spacing:-0.5px">File</div><i class="dd" style="left:561px"></i>
<div class="a st" style="left:575px;letter-spacing:-0.3px">Edit</div><i class="dd" style="left:604px"></i>
<div class="a st" style="left:618px;letter-spacing:-0.38px">Draw</div><i class="dd" style="left:654px"></i>
<div class="a st" style="left:668px;letter-spacing:0.27px">Modify</div><i class="dd" style="left:716px"></i>
<div class="a st" style="left:729px;letter-spacing:-0.38px">View 3D</div><i class="dd" style="left:780px"></i>
<div class="a" style="left:790px;top:500px;width:120px;height:21px;box-sizing:border-box;border:1px solid #b4b4b4;border-radius:3px;background:linear-gradient(#d6d6d6,#c8c8c8 50%,#cdcdcd);box-shadow:inset 0 0 3px 1px #ececec,0 0 0 1px #ededed"></div>
</body></html>
